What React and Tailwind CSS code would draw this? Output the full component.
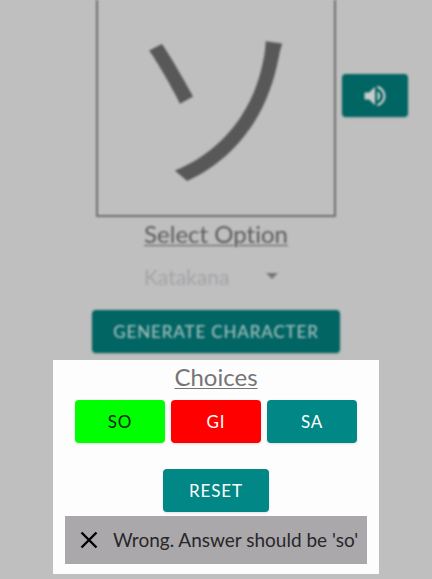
import React from "react";

function ActionButton({ className, children, ...rest }) {
  return (
    <button
      type="button"
      className={`flex h-[43px] items-center justify-center rounded text-[17px] tracking-wider shadow-sm ${className}`}
      {...rest}
    >
      {children}
    </button>
  );
}

function SpeakerIcon() {
  return (
    <svg viewBox="0 0 24 24" className="size-7" fill="currentColor" aria-hidden="true">
      <path d="M3 9v6h4l5 5V4L7 9H3zm13.5 3c0-1.77-1.02-3.29-2.5-4.03v8.05c1.48-.73 2.5-2.25 2.5-4.02zM14 3.23v2.06c2.89.86 5 3.54 5 6.71s-2.11 5.85-5 6.71v2.06c4.01-.91 7-4.49 7-8.77s-2.99-7.86-7-8.77z" />
    </svg>
  );
}

function CharacterSection() {
  return (
    <section className="flex flex-col items-center blur-[1px]">
      <div className="grid w-full grid-cols-[1fr_240px_1fr]">
        <div />
        <div className="flex h-[217px] items-center justify-center border-2 border-t-0 border-[#6f6c70] pt-2.5 pl-1 font-['Liberation_Sans','Noto_Sans_CJK_JP',sans-serif] text-[186px] leading-none font-[350] text-[#585858]">
          <span lang="ja">ソ</span>
        </div>
        <div className="pt-[74px] pl-1.5">
          <ActionButton className="w-[66px] bg-[#006563] text-[#c8cccc]" aria-label="Play sound">
            <SpeakerIcon />
          </ActionButton>
        </div>
      </div>
      <label htmlFor="option" className="text-2xl leading-[34px] text-[#5c5a5e] underline decoration-1 underline-offset-2">
        Select Option
      </label>
      <div className="relative mt-2 mb-4 w-36">
        <select id="option" className="h-[35px] w-full appearance-none bg-transparent text-[21px] text-[#a5a2a7]">
          <option>Katakana</option>
          <option>Hiragana</option>
        </select>
        <svg viewBox="0 0 10 5" className="pointer-events-none absolute top-3.5 right-2.5 h-[6px] w-3" fill="#777478" aria-hidden="true">
          <path d="M0 0h10L5 5z" />
        </svg>
      </div>
      <ActionButton className="w-[248px] bg-[#006563] font-medium text-[#a6c0c0]">GENERATE CHARACTER</ActionButton>
    </section>
  );
}

export default function App() {
  return (
    <main className="min-h-screen bg-[#bfbfbf] font-[Lato,sans-serif] [font-variant-ligatures:none]">
      <CharacterSection />
      <section className="mx-auto mt-[7px] mb-[5px] w-full max-w-[326px] bg-[#fdfdfd] px-3 pb-2.5">
        <h2 className="text-center text-2xl leading-[34px] text-[#777478]">
          <span className="underline decoration-1 underline-offset-2">Choices</span>
        </h2>
        <div className="mt-1.5 flex justify-center gap-1.5">
          <ActionButton className="w-[90px] bg-[#00ff00] text-[#102510]">SO</ActionButton>
          <ActionButton className="w-[90px] bg-[#ff0000] text-white">GI</ActionButton>
          <ActionButton className="w-[90px] bg-[#018786] text-white">SA</ActionButton>
        </div>
        <div className="mt-[26px] flex justify-center">
          <ActionButton className="w-[106px] bg-[#018786] text-white">RESET</ActionButton>
        </div>
        <div role="alert" className="mt-1 flex h-12 items-center gap-3 bg-[#aaa8aa] px-3 text-[19px] whitespace-nowrap text-[#29272a]">
          <button type="button" aria-label="Dismiss" className="shrink-0 text-black">
            <svg viewBox="0 0 24 24" className="size-6" fill="none" stroke="currentColor" strokeWidth="2.4" aria-hidden="true">
              <path d="M4.5 4.5l15 15M19.5 4.5l-15 15" />
            </svg>
          </button>
          <span>Wrong. Answer should be 'so'</span>
        </div>
      </section>
    </main>
  );
}
